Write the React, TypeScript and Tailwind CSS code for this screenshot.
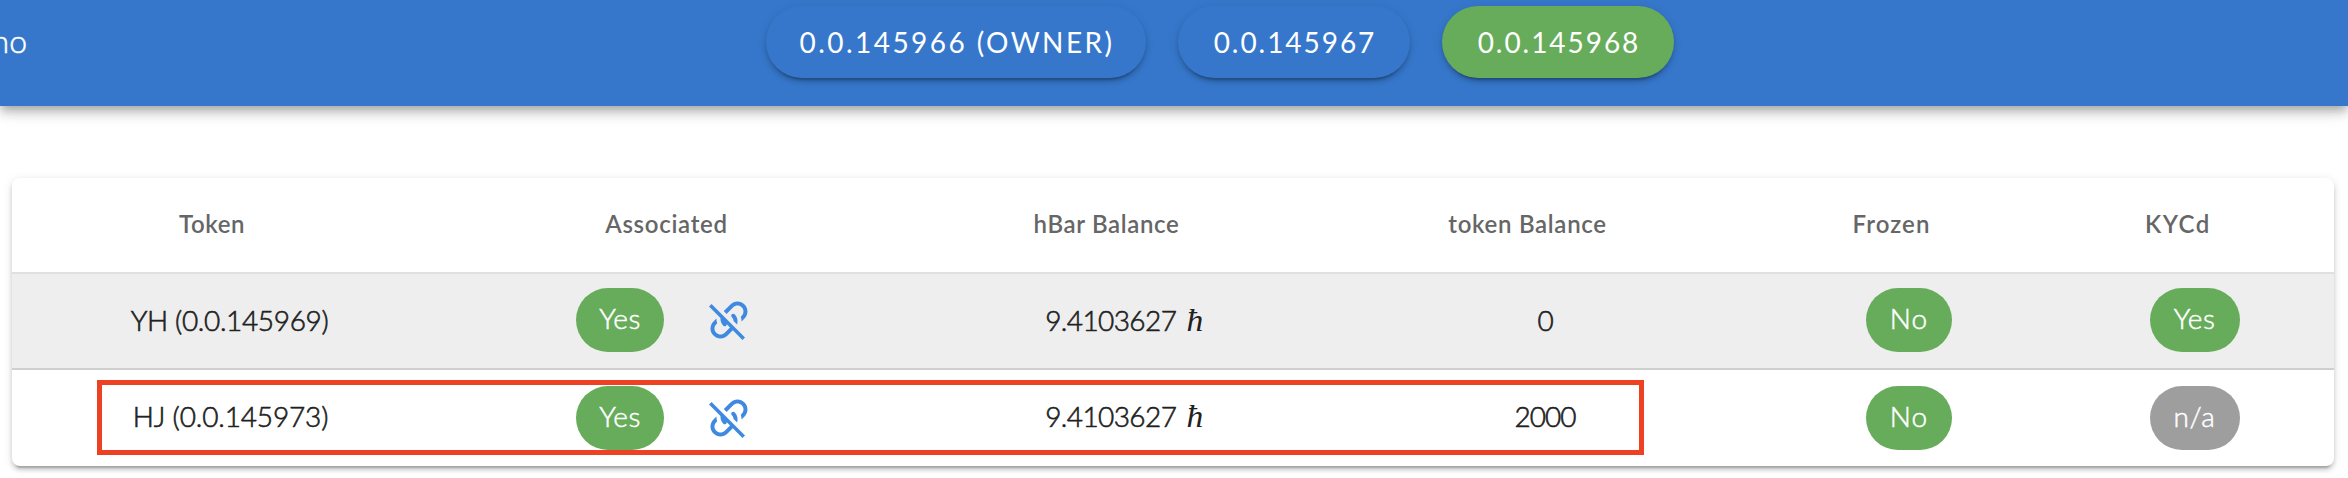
import type { ReactNode } from "react";

const columns = "grid grid-cols-[435px_474px_406px_436px_292px_279px]";

function AccountButton({ label, className }: { label: string; className: string }) {
  return (
    <button
      className={`flex h-[72px] items-center justify-center rounded-full pt-px pl-[2px] text-[28px] leading-[1.2] font-normal text-white shadow-[0_6px_2px_-4px_rgba(0,0,0,0.2),0_4px_4px_0_rgba(0,0,0,0.14),0_2px_10px_0_rgba(0,0,0,0.12)] ${className}`}
    >
      {label}
    </button>
  );
}

function HeaderCell({ children, className }: { children: ReactNode; className: string }) {
  return (
    <div className={`flex items-center justify-center pr-[35px] pb-[2px] font-semibold ${className}`}>{children}</div>
  );
}

function Chip({ label, className }: { label: string; className: string }) {
  return (
    <span
      className={`flex h-[64px] items-center justify-center rounded-full pb-[3px] font-light text-white [-webkit-text-stroke:0.5px_white] ${className}`}
    >
      {label}
    </span>
  );
}

function UnlinkIcon() {
  return (
    <svg viewBox="0 0 24 24" className="size-[48px] fill-[#3f8ae0]">
      <path d="M2,5.27L3.28,4L20,20.72L18.73,22L13.9,17.17L11.29,19.78C9.34,21.73 6.17,21.73 4.22,19.78C2.27,17.83 2.27,14.66 4.22,12.71L5.71,11.22C5.7,12.04 5.83,12.86 6.11,13.65L5.64,14.12C4.46,15.29 4.46,17.19 5.64,18.36C6.81,19.54 8.71,19.54 9.88,18.36L12.5,15.76L10.88,14.15C10.87,14.39 10.77,14.64 10.59,14.83C10.2,15.22 9.56,15.22 9.17,14.83C8.12,13.77 7.63,12.37 7.72,11L2,5.27M12.71,4.22C14.66,2.27 17.83,2.27 19.78,4.22C21.73,6.17 21.73,9.34 19.78,11.29L18.29,12.78C18.3,11.96 18.17,11.14 17.89,10.36L18.36,9.88C19.54,8.71 19.54,6.81 18.36,5.64C17.19,4.46 15.29,4.46 14.12,5.64L10.79,8.97L9.38,7.55L12.71,4.22M13.41,9.17C13.8,8.78 14.44,8.78 14.83,9.17C16.2,10.54 16.61,12.5 16.06,14.23L14.28,12.46C14.23,11.78 13.94,11.11 13.41,10.59C13,10.2 13,9.56 13.41,9.17Z" />
    </svg>
  );
}

type RowProps = {
  token: string;
  tokenClass: string;
  balance: string;
  kyc: ReactNode;
  className: string;
  textPad: string;
  chipPad: string;
};

function TokenRow({ token, tokenClass, balance, kyc, className, textPad, chipPad }: RowProps) {
  const textCell = `flex items-center justify-center font-light [-webkit-text-stroke:0.6px_#212121] ${textPad}`;
  return (
    <div className={`${columns} h-[96px] text-[28px] leading-[1.2] text-[#212121] ${className}`}>
      <div className={`${textCell} ${tokenClass}`}>{token}</div>
      <div className={`flex items-center justify-center ${chipPad}`}>
        <Chip label="Yes" className="w-[88px] bg-[#67ac5b] tracking-[0.5px]" />
        <button className="flex w-[128px] pl-[41px]">
          <UnlinkIcon />
        </button>
      </div>
      <div className={textCell}>
        <span className="tracking-[-0.6px]">9.4103627</span>
        <span className="ml-[11px] inline-block origin-center scale-x-[1.08] font-['Liberation_Serif',serif] text-[31px] leading-[34px] font-normal italic [-webkit-text-stroke:0]">
          ħ
        </span>
      </div>
      <div className={`${textCell} tracking-[-1px]`}>{balance}</div>
      <div className={`flex items-center justify-center ${chipPad}`}>
        <Chip label="No" className="w-[86px] bg-[#67ac5b] tracking-[1px]" />
      </div>
      <div className={`flex items-center justify-center ${chipPad}`}>{kyc}</div>
    </div>
  );
}

export default function App() {
  return (
    <div className="h-[478px] w-[2348px] overflow-hidden bg-white font-['Lato','Open_Sans',sans-serif]">
      <header className="flex h-[106px] bg-[#3677cb] pt-[6px] shadow-[0_4px_8px_-2px_rgba(0,0,0,0.2),0_8px_10px_0_rgba(0,0,0,0.14),0_2px_20px_0_rgba(0,0,0,0.12)]">
        <div className="flex h-[72px] w-[766px] items-center pb-[2px]">
          <span className="flex w-[27px] justify-end text-[32px] leading-[1.2] font-light text-white [-webkit-text-stroke:0.5px_white]">
            no
          </span>
        </div>
        <nav className="flex gap-[32px]">
          <AccountButton label="0.0.145966 (OWNER)" className="w-[380px] bg-[#3677cb] tracking-[2.45px]" />
          <AccountButton label="0.0.145967" className="w-[232px] bg-[#3677cb] tracking-[1.95px]" />
          <AccountButton label="0.0.145968" className="w-[232px] bg-[#67ac5b] tracking-[1.95px]" />
        </nav>
      </header>

      <main className="pt-[72px] pl-[12px]">
        <section className="relative h-[288px] w-[2322px] rounded-[8px] bg-white shadow-[0_6px_2px_-4px_rgba(0,0,0,0.2),0_4px_4px_0_rgba(0,0,0,0.14),0_2px_10px_0_rgba(0,0,0,0.12)]">
          <div className={`${columns} h-[96px] border-b-2 border-[#e0e0e0] text-[24px] leading-[1.2] text-[#666666]`}>
            <HeaderCell className="tracking-[0.55px]">Token</HeaderCell>
            <HeaderCell className="tracking-[0.7px]">Associated</HeaderCell>
            <HeaderCell className="tracking-[0.65px]">hBar Balance</HeaderCell>
            <HeaderCell className="tracking-[0.7px]">token Balance</HeaderCell>
            <HeaderCell className="tracking-[1.1px]">Frozen</HeaderCell>
            <HeaderCell className="pl-[2px] tracking-[1.5px]">KYCd</HeaderCell>
          </div>
          <TokenRow
            token="YH (0.0.145969)"
            tokenClass="tracking-[-0.35px]"
            balance="0"
            kyc={<Chip label="Yes" className="w-[90px] bg-[#67ac5b] tracking-[0.5px]" />}
            className="border-b-2 border-[#cfcfcf] bg-[#eeeeee]"
            textPad="pb-px"
            chipPad="pb-[2px]"
          />
          <TokenRow
            token="HJ (0.0.145973)"
            tokenClass="pl-[2px] tracking-[-0.15px]"
            balance="2000"
            kyc={<Chip label="n/a" className="w-[90px] bg-[#9e9e9e] tracking-[0.7px]" />}
            className=""
            textPad="pb-[3px]"
            chipPad="pb-0"
          />
          <div className="pointer-events-none absolute top-[202px] left-[85px] h-[75px] w-[1547px] border-[5px] border-[#ee4023]" />
        </section>
      </main>
    </div>
  );
}
